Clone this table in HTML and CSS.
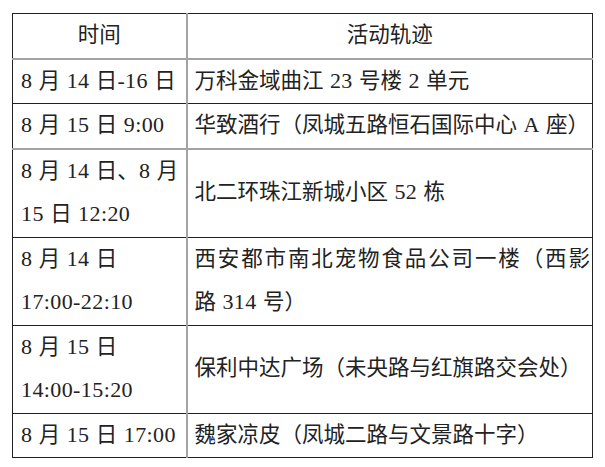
FILE: index.html
```html
<!DOCTYPE html>
<html lang="zh-CN">
<head>
<meta charset="utf-8">
<title>活动轨迹</title>
<link rel="stylesheet" href="styles.css">
</head>
<body>
<table class="track">
  <colgroup>
    <col class="col-time">
    <col class="col-place">
  </colgroup>
  <thead>
    <tr class="soft">
      <th class="time">时间</th>
      <th class="place">活动轨迹</th>
    </tr>
  </thead>
  <tbody>
    <tr>
      <td class="time"><span class="num">8</span> 月 <span class="num">14</span> 日<span class="num">-16</span> 日</td>
      <td class="place">万科金域曲江 <span class="num">23</span> 号楼 <span class="num">2</span> 单元</td>
    </tr>
    <tr class="soft">
      <td class="time"><span class="num">8</span> 月 <span class="num">15</span> 日 <span class="num">9:00</span></td>
      <td class="place">华致酒行（凤城五路恒石国际中心 <span class="num">A</span> 座）</td>
    </tr>
    <tr>
      <td class="time"><span class="line"><span class="num">8</span> 月 <span class="num">14</span> 日、<span class="num">8</span> 月</span><span class="line"><span class="num">15</span> 日 <span class="num">12:20</span></span></td>
      <td class="place">北二环珠江新城小区 <span class="num">52</span> 栋</td>
    </tr>
    <tr>
      <td class="time"><span class="line"><span class="num">8</span> 月 <span class="num">14</span> 日</span><span class="line"><span class="num">17:00-22:10</span></span></td>
      <td class="place"><span class="line just">西安都市南北宠物食品公司一楼（西影</span><span class="line">路 <span class="num">314</span> 号）</span></td>
    </tr>
    <tr>
      <td class="time"><span class="line"><span class="num">8</span> 月 <span class="num">15</span> 日</span><span class="line"><span class="num">14:00-15:20</span></span></td>
      <td class="place">保利中达广场（未央路与红旗路交会处）</td>
    </tr>
    <tr>
      <td class="time"><span class="num">8</span> 月 <span class="num">15</span> 日 <span class="num">17:00</span></td>
      <td class="place">魏家凉皮（凤城二路与文景路十字）</td>
    </tr>
  </tbody>
</table>
</body>
</html>
```

FILE: styles.css
```css
html, body {
  margin: 0;
  padding: 0;
  background: #ffffff;
}

body {
  font-family: "Liberation Serif", "Noto Sans CJK SC", serif;
  font-size: 21.5px;
  color: #222222;
}

.track {
  margin: 13px 0 0 12px;
  width: 581px;
  table-layout: fixed;
  border-collapse: collapse;
  border: 1px solid #222222;
}

.col-time {
  width: 174px;
}

.track th,
.track td {
  padding: 0 2px 0 7px;
  line-height: 43.5px;
  font-weight: normal;
  text-align: left;
  vertical-align: middle;
  word-spacing: 1px;
  white-space: nowrap;
  overflow: visible;
  border-top: 1px solid #222222;
  border-bottom: 1px solid #222222;
}

.track td.time {
  padding-left: 8px;
}

.track .time {
  border-right: 2px solid #a3a3a3;
}

.track th {
  text-align: center;
}

.track thead th {
  padding-left: 0;
  padding-right: 0;
}

.track tr.soft th,
.track tr.soft td {
  border-bottom: 2px solid #a3a3a3;
}

.num {
  font-size: 22px;
  line-height: 0;
  letter-spacing: 0.4px;
}

.line {
  display: block;
}

.just {
  text-align: justify;
  text-align-last: justify;
  white-space: normal;
}
```
